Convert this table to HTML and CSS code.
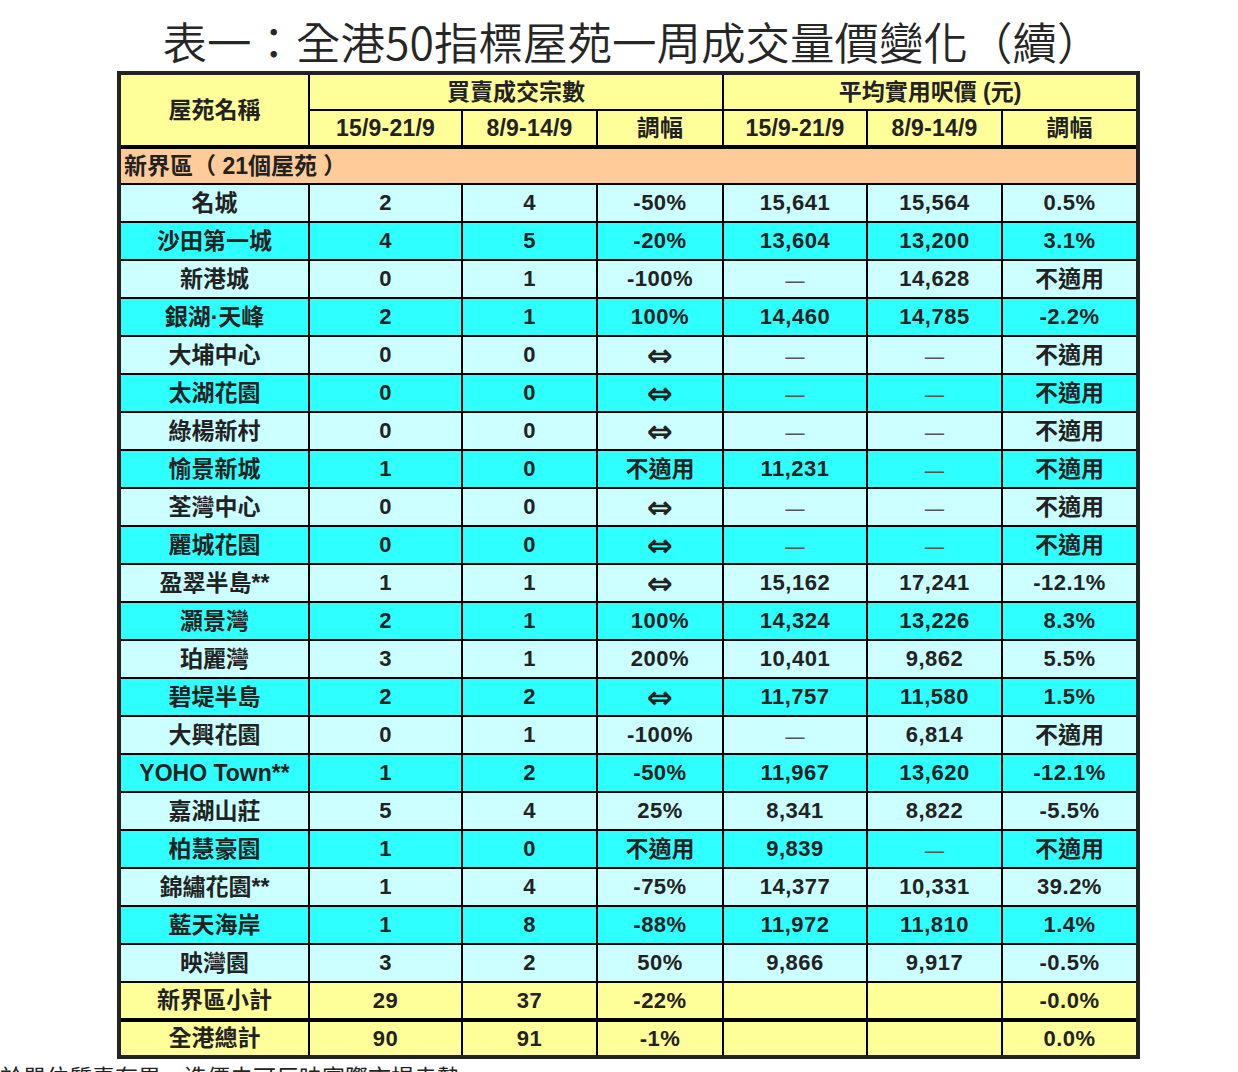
FILE: index.html
```html
<!DOCTYPE html>
<html lang="zh-Hant">
<head>
<meta charset="utf-8">
<title>表一：全港50指標屋苑一周成交量價變化（續）</title>
<link rel="stylesheet" href="styles.css">
</head>
<body>
<h1 class="title">表一：全港50指標屋苑一周成交量價變化（續）</h1>
<div class="sheet">
  <div class="hd name">屋苑名稱</div>
  <div class="hd grp">買賣成交宗數</div>
  <div class="hd grp last">平均實用呎價 (元)</div>
  <div class="hd sub">15/9-21/9</div>
  <div class="hd sub">8/9-14/9</div>
  <div class="hd sub">調幅</div>
  <div class="hd sub">15/9-21/9</div>
  <div class="hd sub">8/9-14/9</div>
  <div class="hd sub last">調幅</div>
  <div class="section">新界區（ 21個屋苑 ）</div>

  <div class="row a"><div>名城</div><div>2</div><div>4</div><div>-50%</div><div>15,641</div><div>15,564</div><div>0.5%</div></div>
  <div class="row b"><div>沙田第一城</div><div>4</div><div>5</div><div>-20%</div><div>13,604</div><div>13,200</div><div>3.1%</div></div>
  <div class="row a"><div>新港城</div><div>0</div><div>1</div><div>-100%</div><div><span class="na">—</span></div><div>14,628</div><div><span class="cj">不適用</span></div></div>
  <div class="row b"><div>銀湖·天峰</div><div>2</div><div>1</div><div>100%</div><div>14,460</div><div>14,785</div><div>-2.2%</div></div>
  <div class="row a"><div>大埔中心</div><div>0</div><div>0</div><div><span class="eq">⇔</span></div><div><span class="na">—</span></div><div><span class="na">—</span></div><div><span class="cj">不適用</span></div></div>
  <div class="row b"><div>太湖花園</div><div>0</div><div>0</div><div><span class="eq">⇔</span></div><div><span class="na">—</span></div><div><span class="na">—</span></div><div><span class="cj">不適用</span></div></div>
  <div class="row a"><div>綠楊新村</div><div>0</div><div>0</div><div><span class="eq">⇔</span></div><div><span class="na">—</span></div><div><span class="na">—</span></div><div><span class="cj">不適用</span></div></div>
  <div class="row b"><div>愉景新城</div><div>1</div><div>0</div><div><span class="cj">不適用</span></div><div>11,231</div><div><span class="na">—</span></div><div><span class="cj">不適用</span></div></div>
  <div class="row a"><div>荃灣中心</div><div>0</div><div>0</div><div><span class="eq">⇔</span></div><div><span class="na">—</span></div><div><span class="na">—</span></div><div><span class="cj">不適用</span></div></div>
  <div class="row b"><div>麗城花園</div><div>0</div><div>0</div><div><span class="eq">⇔</span></div><div><span class="na">—</span></div><div><span class="na">—</span></div><div><span class="cj">不適用</span></div></div>
  <div class="row a"><div>盈翠半島**</div><div>1</div><div>1</div><div><span class="eq">⇔</span></div><div>15,162</div><div>17,241</div><div>-12.1%</div></div>
  <div class="row b"><div>灝景灣</div><div>2</div><div>1</div><div>100%</div><div>14,324</div><div>13,226</div><div>8.3%</div></div>
  <div class="row a"><div>珀麗灣</div><div>3</div><div>1</div><div>200%</div><div>10,401</div><div>9,862</div><div>5.5%</div></div>
  <div class="row b"><div>碧堤半島</div><div>2</div><div>2</div><div><span class="eq">⇔</span></div><div>11,757</div><div>11,580</div><div>1.5%</div></div>
  <div class="row a"><div>大興花園</div><div>0</div><div>1</div><div>-100%</div><div><span class="na">—</span></div><div>6,814</div><div><span class="cj">不適用</span></div></div>
  <div class="row b"><div>YOHO Town**</div><div>1</div><div>2</div><div>-50%</div><div>11,967</div><div>13,620</div><div>-12.1%</div></div>
  <div class="row a"><div>嘉湖山莊</div><div>5</div><div>4</div><div>25%</div><div>8,341</div><div>8,822</div><div>-5.5%</div></div>
  <div class="row b"><div>柏慧豪園</div><div>1</div><div>0</div><div><span class="cj">不適用</span></div><div>9,839</div><div><span class="na">—</span></div><div><span class="cj">不適用</span></div></div>
  <div class="row a"><div>錦繡花園**</div><div>1</div><div>4</div><div>-75%</div><div>14,377</div><div>10,331</div><div>39.2%</div></div>
  <div class="row b"><div>藍天海岸</div><div>1</div><div>8</div><div>-88%</div><div>11,972</div><div>11,810</div><div>1.4%</div></div>
  <div class="row a"><div>映灣園</div><div>3</div><div>2</div><div>50%</div><div>9,866</div><div>9,917</div><div>-0.5%</div></div>
  <div class="row y subtotal"><div>新界區小計</div><div>29</div><div>37</div><div>-22%</div><div></div><div></div><div>-0.0%</div></div>
  <div class="row y total"><div>全港總計</div><div>90</div><div>91</div><div>-1%</div><div></div><div></div><div>0.0%</div></div>
</div>
<p class="note">由於單位質素有異，造價未可反映實際市場走勢</p>
</body>
</html>
```
FILE: styles.css
```css
html, body {
  margin: 0;
  padding: 0;
  background: #fff;
}

body {
  color: #222;
  font-family: "Liberation Sans", "Noto Sans CJK TC", sans-serif;
}

.title {
  margin: 16px 0 5px;
  padding-left: 26px;
  height: 50px;
  line-height: 50px;
  text-align: center;
  font-family: "Noto Sans CJK TC", sans-serif;
  font-weight: 350;
  font-size: 44.5px;
  color: #262626;
}

.sheet {
  display: grid;
  grid-template-columns: 189px 153px 135px 126px 144px 135px 133px;
  grid-template-rows: 36px 38px 36px repeat(21, 38px) 39px 33px;
  width: max-content;
  margin-left: 117px;
  border: 4px solid #222;
}

.sheet > div,
.row > div {
  box-sizing: border-box;
  display: flex;
  align-items: center;
  justify-content: center;
  border-right: 2px solid #000;
  border-bottom: 2px solid #000;
  font-weight: bold;
  font-size: 23px;
  line-height: 1;
  white-space: nowrap;
}

.row {
  display: contents !important;
}

.hd {
  background: #ffff99;
}

.hd.name {
  grid-row: span 2;
  border-bottom-width: 4px !important;
}

.hd.grp {
  grid-column: span 3;
}

.hd.sub {
  border-bottom-width: 4px !important;
  letter-spacing: 0.2px;
}

.sheet > .last,
.row > div:last-child {
  border-right: none;
}

.sheet > .section {
  grid-column: 1 / -1;
  justify-content: flex-start;
  padding-left: 3px;
  background: #ffcc99;
  border-right: none;
}

.row > div:not(:first-child) {
  font-size: 22px;
  letter-spacing: 0.5px;
}

.row.a > div {
  background: #ccffff;
}

.row.b > div {
  background: #2effff;
}

.row.y > div {
  background: #ffff99;
}

.row.subtotal > div {
  border-bottom-width: 4px;
}

.row.total > div {
  border-bottom: none;
}

.cj {
  font-size: 23px;
  letter-spacing: 0;
}

.na {
  font-family: "Noto Sans CJK TC", sans-serif;
  font-weight: 400;
  color: #555;
  font-size: 24px;
  letter-spacing: 0;
}

.eq {
  font-family: "DejaVu Sans", sans-serif;
  font-weight: bold;
  font-size: 31px;
  line-height: 1;
  letter-spacing: 0;
}

.note {
  margin: 2px 0 0 -23px;
  font-family: "Noto Sans CJK TC", sans-serif;
  font-size: 23px;
  line-height: 30px;
  color: #222;
  white-space: nowrap;
}
```
